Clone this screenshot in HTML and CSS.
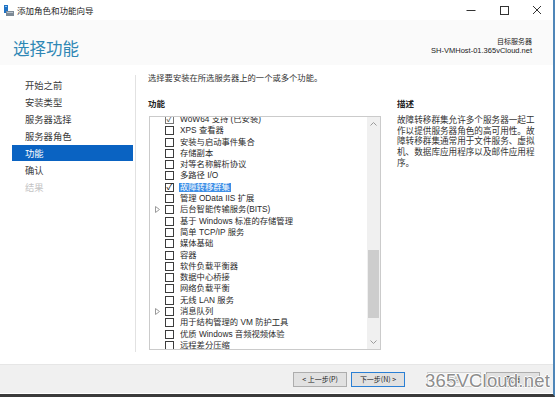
FILE: index.html
```html
<!DOCTYPE html>
<html lang="zh-CN">
<head>
<meta charset="utf-8">
<title>添加角色和功能向导</title>
<link rel="stylesheet" href="styles.css">
</head>
<body>
<div class="window">
  <div class="titlebar">
    <svg class="app-icon" width="10" height="11" viewBox="0 0 10 11">
      <rect x="0" y="0" width="4" height="8" fill="#1f72c4"/>
      <rect x="1" y="1" width="2" height="1" fill="#8cc4f0"/>
      <rect x="2" y="6" width="8" height="5" fill="#7d8a96"/>
      <rect x="3" y="7" width="6" height="1" fill="#b9c3cc"/>
    </svg>
    <span class="title-text">添加角色和功能向导</span>
    <div class="controls">
      <svg width="10" height="10" viewBox="0 0 10 10"><line x1="0.5" y1="5.5" x2="9.5" y2="5.5" stroke="#333" stroke-width="1"/></svg>
      <svg width="10" height="10" viewBox="0 0 10 10"><rect x="1.5" y="1.5" width="8" height="8" fill="none" stroke="#333" stroke-width="1"/></svg>
      <svg width="10" height="10" viewBox="0 0 10 10"><path d="M1 1 L9 9 M9 1 L1 9" stroke="#333" stroke-width="1"/></svg>
    </div>
  </div>

  <div class="header">
    <h1 class="page-title">选择功能</h1>
    <div class="target">
      <div class="target-label">目标服务器</div>
      <div class="target-host">SH-VMHost-01.365vCloud.net</div>
    </div>
  </div>

  <div class="main">
    <nav class="nav">
      <div class="nav-item">开始之前</div>
      <div class="nav-item">安装类型</div>
      <div class="nav-item">服务器选择</div>
      <div class="nav-item">服务器角色</div>
      <div class="nav-item active">功能</div>
      <div class="nav-item">确认</div>
      <div class="nav-item disabled">结果</div>
    </nav>

    <div class="content">
      <p class="intro">选择要安装在所选服务器上的一个或多个功能。</p>
      <div class="columns">
        <div class="col-features">
          <div class="col-head">功能</div>
          <div class="listbox">
            <div class="list-viewport">
              <div class="list">
                <div class="row"><span class="exp"></span><span class="cb checked grey">✓</span><span class="lbl">WoW64 支持 (已安装)</span></div>
                <div class="row"><span class="exp"></span><span class="cb"></span><span class="lbl">XPS 查看器</span></div>
                <div class="row"><span class="exp"></span><span class="cb"></span><span class="lbl">安装与启动事件集合</span></div>
                <div class="row"><span class="exp"></span><span class="cb"></span><span class="lbl">存储副本</span></div>
                <div class="row"><span class="exp"></span><span class="cb"></span><span class="lbl">对等名称解析协议</span></div>
                <div class="row"><span class="exp"></span><span class="cb"></span><span class="lbl">多路径 I/O</span></div>
                <div class="row"><span class="exp"></span><span class="cb checked">✓</span><span class="lbl selected">故障转移群集</span></div>
                <div class="row"><span class="exp"></span><span class="cb"></span><span class="lbl">管理 OData IIS 扩展</span></div>
                <div class="row"><span class="exp"><svg width="5" height="7" viewBox="0 0 5 7"><path d="M0.5 0.5 L4.5 3.5 L0.5 6.5 Z" fill="none" stroke="#9a9a9a" stroke-width="1"/></svg></span><span class="cb"></span><span class="lbl">后台智能传输服务(BITS)</span></div>
                <div class="row"><span class="exp"></span><span class="cb"></span><span class="lbl">基于 Windows 标准的存储管理</span></div>
                <div class="row"><span class="exp"></span><span class="cb"></span><span class="lbl">简单 TCP/IP 服务</span></div>
                <div class="row"><span class="exp"></span><span class="cb"></span><span class="lbl">媒体基础</span></div>
                <div class="row"><span class="exp"></span><span class="cb"></span><span class="lbl">容器</span></div>
                <div class="row"><span class="exp"></span><span class="cb"></span><span class="lbl">软件负载平衡器</span></div>
                <div class="row"><span class="exp"></span><span class="cb"></span><span class="lbl">数据中心桥接</span></div>
                <div class="row"><span class="exp"></span><span class="cb"></span><span class="lbl">网络负载平衡</span></div>
                <div class="row"><span class="exp"></span><span class="cb"></span><span class="lbl">无线 LAN 服务</span></div>
                <div class="row"><span class="exp"><svg width="5" height="7" viewBox="0 0 5 7"><path d="M0.5 0.5 L4.5 3.5 L0.5 6.5 Z" fill="none" stroke="#9a9a9a" stroke-width="1"/></svg></span><span class="cb"></span><span class="lbl">消息队列</span></div>
                <div class="row"><span class="exp"></span><span class="cb"></span><span class="lbl">用于结构管理的 VM 防护工具</span></div>
                <div class="row"><span class="exp"></span><span class="cb"></span><span class="lbl">优质 Windows 音频视频体验</span></div>
                <div class="row"><span class="exp"></span><span class="cb"></span><span class="lbl">远程差分压缩</span></div>
              </div>
            </div>
            <div class="scrollbar">
              <div class="sb-btn"><svg width="7" height="4" viewBox="0 0 7 4"><path d="M0.5 3.5 L3.5 0.5 L6.5 3.5" fill="none" stroke="#9a9a9a" stroke-width="1"/></svg></div>
              <div class="sb-thumb"></div>
              <div class="sb-space"></div>
              <div class="sb-btn"><svg width="7" height="4" viewBox="0 0 7 4"><path d="M0.5 0.5 L3.5 3.5 L6.5 0.5" fill="none" stroke="#9a9a9a" stroke-width="1"/></svg></div>
            </div>
          </div>
        </div>
        <div class="col-desc">
          <div class="col-head">描述</div>
          <p class="desc">故障转移群集允许多个服务器一起工作以提供服务器角色的高可用性。故障转移群集通常用于文件服务、虚拟机、数据库应用程序以及邮件应用程序。</p>
        </div>
      </div>
    </div>
  </div>

  <div class="footer">
    <button class="btn">&lt; 上一步(P)</button>
    <button class="btn primary">下一步(N) &gt;</button>
    <button class="btn disabled install">安装</button>
    <button class="btn">取消</button>
  </div>

  <div class="watermark">365VCloud.net</div>
</div>
</body>
</html>
```

FILE: styles.css
```css
* { box-sizing: border-box; }

html, body {
  margin: 0;
  padding: 0;
  background: #ffffff;
}

body {
  font-family: "Liberation Sans", "Noto Sans CJK SC", sans-serif;
  color: #222;
  width: 558px;
  height: 399px;
  overflow: hidden;
}

.window {
  position: relative;
  width: 555px;
  height: 397px;
  background: #ffffff;
  border-right: 2px solid #4f86b8;
  border-bottom: 3px solid #3a3a3a;
  display: flex;
  flex-direction: column;
}

/* title bar */
.titlebar {
  height: 20px;
  display: flex;
  align-items: center;
  padding-left: 4px;
  background: #fff;
}
.app-icon { display: block; margin-top: 1px; }
.title-text {
  font-family: "Noto Sans CJK SC", sans-serif;
  font-size: 8.5px;
  margin-left: 3px;
  color: #222;
}
.controls {
  margin-left: auto;
  display: flex;
  gap: 23px;
  margin-right: 11px;
}
.controls svg { display: block; }

/* header */
.header {
  height: 45px;
  background: #fafafa;
  display: flex;
  justify-content: space-between;
  padding: 0 21px 0 13px;
}
.page-title {
  margin: 18px 0 0 0;
  font-family: "Noto Sans CJK SC", sans-serif;
  font-weight: 400;
  font-size: 16.5px;
  line-height: 20px;
  color: #2f87b5;
}
.target {
  margin-top: 17px;
  text-align: right;
}
.target-label {
  font-family: "Noto Sans CJK SC", sans-serif;
  font-size: 7px;
  line-height: 9px;
  color: #222;
}
.target-host {
  font-size: 7.5px;
  line-height: 9px;
  color: #222;
}

/* main */
.main {
  height: 299px;
  display: flex;
  align-items: flex-start;
}
.nav {
  width: 136px;
  height: 277px;
  margin-top: 10px;
  padding-top: 2px;
  border-right: 1px solid #e2e2e2;
  font-family: "Noto Sans CJK SC", sans-serif;
  font-size: 9.3px;
}
.nav-item {
  margin-left: 12px;
  width: 121px;
  height: 16px;
  line-height: 16px;
  margin-bottom: 1px;
  padding-left: 13px;
  color: #3a3a3a;
}
.nav-item.active {
  background: #0a63c2;
  color: #fff;
}
.nav-item.disabled { color: #c4c4c4; }

.content {
  flex: 1;
  padding: 7px 0 0 12px;
  font-family: "Liberation Sans", "Noto Sans CJK SC", sans-serif;
}
.intro {
  margin: 0;
  font-size: 8.3px;
  line-height: 12px;
  color: #333;
}
.columns {
  display: flex;
  gap: 16px;
  margin-top: 13px;
}
.col-features { width: 233px; }
.col-desc { width: 145px; }
.col-head {
  font-family: "Noto Sans CJK SC", sans-serif;
  font-weight: 700;
  font-size: 8.5px;
  line-height: 12px;
  color: #222;
  height: 12px;
}

/* list box */
.listbox {
  margin-top: 7px;
  margin-left: 1px;
  width: 232px;
  height: 234px;
  border: 1px solid #cbcbcb;
  display: flex;
  background: #fff;
}
.list-viewport {
  flex: 1;
  overflow: hidden;
}
.list {
  margin-top: -3.2px;
}
.row {
  height: 11.3px;
  display: flex;
  align-items: center;
  font-size: 8.3px;
  color: #2a2a2a;
}
.exp {
  width: 15px;
  padding-left: 5px;
  display: flex;
  align-items: center;
}
.exp svg { display: block; }
.cb {
  width: 9px;
  height: 9px;
  border: 1px solid #3c3c3c;
  background: #fff;
  font-size: 9px;
  line-height: 7px;
  text-align: center;
  color: #111;
  flex: none;
}
.cb.grey { color: #555; border-color: #777; }
.lbl {
  margin-left: 5px;
  white-space: nowrap;
  line-height: 9px;
  padding: 0 1px;
}
.lbl.selected {
  background: #3d8ee6;
  color: #fff;
}

.scrollbar {
  width: 13px;
  background: #f0f0f0;
  display: flex;
  flex-direction: column;
}
.sb-btn {
  height: 14px;
  display: flex;
  align-items: center;
  justify-content: center;
}
.sb-btn svg { display: block; }
.sb-thumb {
  margin-top: 119px;
  height: 68px;
  background: #cdcdcd;
  margin-left: 1px;
  margin-right: 1px;
}
.sb-space { flex: 1; }

/* description */
.desc {
  margin: 5px 0 0 0;
  width: 140px;
  font-family: "Noto Sans CJK SC", sans-serif;
  font-size: 8.6px;
  line-height: 10.7px;
  color: #333;
}

/* footer */
.footer {
  height: 29px;
  background: #f0f0f0;
  border-top: 1px solid #e6e6e6;
  display: flex;
  align-items: flex-start;
  padding: 7px 13px 0 0;
  justify-content: flex-end;
  gap: 4px;
}
.btn {
  width: 54px;
  height: 15px;
  padding: 0;
  margin: 0;
  font-family: "Noto Sans CJK SC", sans-serif;
  font-size: 7px;
  line-height: 13px;
  color: #222;
  background: #e1e1e1;
  border: 1px solid #adadad;
}
.btn.primary { border-color: #2a7fd4; }
.btn.install { margin-left: 18px; }
.btn.disabled {
  background: #f4f4f4;
  border-color: #cfcfcf;
  color: #a0a0a0;
}
.btn + .btn:last-child { margin-left: 1px; }

.watermark {
  position: absolute;
  left: 425px;
  top: 369px;
  font-family: "Liberation Sans", sans-serif;
  font-size: 18.5px;
  line-height: 24px;
  color: #8d8d8d;
  text-shadow: 1px 0 0 #fff, -1px 0 0 #fff, 0 1px 0 #fff, 0 -1px 0 #fff;
  letter-spacing: 0.2px;
}
```
